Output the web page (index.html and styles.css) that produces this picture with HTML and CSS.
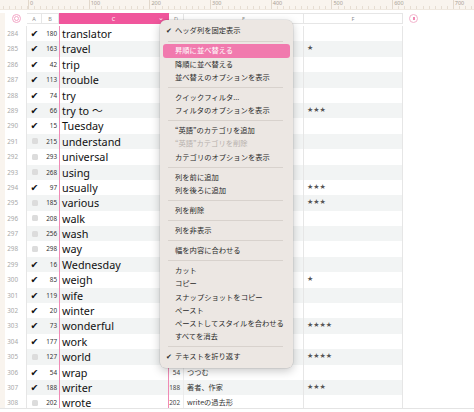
FILE: index.html
```html
<!DOCTYPE html>
<html lang="ja">
<head>
    <meta charset="UTF-8">
    <title>単語帳</title>
    <link rel="stylesheet" href="styles.css">
</head>
<body>
<div class="page">
    <div class="ruler">
        <span>0</span><span>100</span><span>200</span><span>300</span><span>400</span><span>500</span><span>600</span><span>700</span>
    </div>

    <div class="sheet">
        <div class="vruler"></div>
        <div class="table">
            <div class="head">
                <span class="hnum"><i class="ring"></i></span>
                <span>A</span>
                <span>B</span>
                <span class="hsel">C<b class="chev">⌄</b></span>
                <span>D</span>
                <span>E</span>
                <span>F</span>
                <span class="hrest"><i class="pause"></i></span>
            </div>

            <div class="body">
                <div class="row"><span class="num">284</span><span class="chk">✔</span><span class="cnt">180</span><span class="word">translator</span><span class="d"></span><span class="e"></span><span class="f"></span><span class="rest"></span></div>
                <div class="row"><span class="num">285</span><span class="chk">✔</span><span class="cnt">163</span><span class="word">travel</span><span class="d"></span><span class="e"></span><span class="f">★</span><span class="rest"></span></div>
                <div class="row"><span class="num">286</span><span class="chk">✔</span><span class="cnt">42</span><span class="word">trip</span><span class="d"></span><span class="e"></span><span class="f"></span><span class="rest"></span></div>
                <div class="row"><span class="num">287</span><span class="chk">✔</span><span class="cnt">113</span><span class="word">trouble</span><span class="d"></span><span class="e"></span><span class="f"></span><span class="rest"></span></div>
                <div class="row"><span class="num">288</span><span class="chk">✔</span><span class="cnt">74</span><span class="word">try</span><span class="d"></span><span class="e"></span><span class="f"></span><span class="rest"></span></div>
                <div class="row"><span class="num">289</span><span class="chk">✔</span><span class="cnt">66</span><span class="word">try to 〜</span><span class="d"></span><span class="e"></span><span class="f">★★★</span><span class="rest"></span></div>
                <div class="row"><span class="num">290</span><span class="chk">✔</span><span class="cnt">15</span><span class="word">Tuesday</span><span class="d"></span><span class="e"></span><span class="f"></span><span class="rest"></span></div>
                <div class="row"><span class="num">291</span><span class="chk off"></span><span class="cnt">215</span><span class="word">understand</span><span class="d"></span><span class="e"></span><span class="f"></span><span class="rest"></span></div>
                <div class="row"><span class="num">292</span><span class="chk off"></span><span class="cnt">293</span><span class="word">universal</span><span class="d"></span><span class="e"></span><span class="f"></span><span class="rest"></span></div>
                <div class="row"><span class="num">293</span><span class="chk off"></span><span class="cnt">268</span><span class="word">using</span><span class="d"></span><span class="e"></span><span class="f"></span><span class="rest"></span></div>
                <div class="row"><span class="num">294</span><span class="chk">✔</span><span class="cnt">97</span><span class="word">usually</span><span class="d"></span><span class="e"></span><span class="f">★★★</span><span class="rest"></span></div>
                <div class="row"><span class="num">295</span><span class="chk off"></span><span class="cnt">185</span><span class="word">various</span><span class="d"></span><span class="e"></span><span class="f">★★★</span><span class="rest"></span></div>
                <div class="row"><span class="num">296</span><span class="chk off"></span><span class="cnt">208</span><span class="word">walk</span><span class="d"></span><span class="e"></span><span class="f"></span><span class="rest"></span></div>
                <div class="row"><span class="num">297</span><span class="chk off"></span><span class="cnt">256</span><span class="word">wash</span><span class="d"></span><span class="e"></span><span class="f"></span><span class="rest"></span></div>
                <div class="row"><span class="num">298</span><span class="chk off"></span><span class="cnt">298</span><span class="word">way</span><span class="d"></span><span class="e"></span><span class="f"></span><span class="rest"></span></div>
                <div class="row"><span class="num">299</span><span class="chk">✔</span><span class="cnt">16</span><span class="word">Wednesday</span><span class="d"></span><span class="e"></span><span class="f"></span><span class="rest"></span></div>
                <div class="row"><span class="num">300</span><span class="chk">✔</span><span class="cnt">85</span><span class="word">weigh</span><span class="d"></span><span class="e"></span><span class="f">★</span><span class="rest"></span></div>
                <div class="row"><span class="num">301</span><span class="chk">✔</span><span class="cnt">119</span><span class="word">wife</span><span class="d"></span><span class="e"></span><span class="f"></span><span class="rest"></span></div>
                <div class="row"><span class="num">302</span><span class="chk">✔</span><span class="cnt">20</span><span class="word">winter</span><span class="d"></span><span class="e"></span><span class="f"></span><span class="rest"></span></div>
                <div class="row"><span class="num">303</span><span class="chk">✔</span><span class="cnt">73</span><span class="word">wonderful</span><span class="d"></span><span class="e"></span><span class="f">★★★★</span><span class="rest"></span></div>
                <div class="row"><span class="num">304</span><span class="chk">✔</span><span class="cnt">177</span><span class="word">work</span><span class="d"></span><span class="e"></span><span class="f"></span><span class="rest"></span></div>
                <div class="row"><span class="num">305</span><span class="chk off"></span><span class="cnt">127</span><span class="word">world</span><span class="d"></span><span class="e"></span><span class="f">★★★★</span><span class="rest"></span></div>
                <div class="row"><span class="num">306</span><span class="chk">✔</span><span class="cnt">54</span><span class="word">wrap</span><span class="d">54</span><span class="e">つつむ</span><span class="f"></span><span class="rest"></span></div>
                <div class="row"><span class="num">307</span><span class="chk">✔</span><span class="cnt">188</span><span class="word">writer</span><span class="d">188</span><span class="e">著者、作家</span><span class="f">★★★</span><span class="rest"></span></div>
                <div class="row"><span class="num">308</span><span class="chk off"></span><span class="cnt">202</span><span class="word">wrote</span><span class="d">202</span><span class="e">writeの過去形</span><span class="f"></span><span class="rest"></span></div>
            </div>
        </div>
    </div>

    <!-- context menu for column C -->
    <div class="menu">
        <div class="item"><span class="tick">✔</span>ヘッダ列を固定表示</div>
        <div class="sep"></div>
        <div class="item active">昇順に並べ替える</div>
        <div class="item">降順に並べ替える</div>
        <div class="item">並べ替えのオプションを表示</div>
        <div class="sep"></div>
        <div class="item">クイックフィルタ...</div>
        <div class="item">フィルタのオプションを表示</div>
        <div class="sep"></div>
        <div class="item">“英語”のカテゴリを追加</div>
        <div class="item disabled">“英語”カテゴリを削除</div>
        <div class="item">カテゴリのオプションを表示</div>
        <div class="sep"></div>
        <div class="item">列を前に追加</div>
        <div class="item">列を後ろに追加</div>
        <div class="sep"></div>
        <div class="item">列を削除</div>
        <div class="sep"></div>
        <div class="item">列を非表示</div>
        <div class="sep"></div>
        <div class="item">幅を内容に合わせる</div>
        <div class="sep"></div>
        <div class="item">カット</div>
        <div class="item">コピー</div>
        <div class="item">スナップショットをコピー</div>
        <div class="item">ペースト</div>
        <div class="item">ペーストしてスタイルを合わせる</div>
        <div class="item">すべてを消去</div>
        <div class="sep"></div>
        <div class="item"><span class="tick">✔</span>テキストを折り返す</div>
    </div>
</div>
</body>
</html>
```

FILE: styles.css
```css
body {
    margin: 0;
    background: #fff;
    font-family: "Noto Sans", "Noto Sans CJK JP", sans-serif;
}

.page {
    position: relative;
    width: 474px;
    height: 412px;
    overflow: hidden;
}

/* ruler */
.ruler {
    height: 10px;
    display: flex;
    padding-left: 28px;
    background-color: #f9f4ee;
    background-image: repeating-linear-gradient(to right, #e6ddd2 0 1px, transparent 1px 6.07px);
    background-size: 100% 3px;
    background-position: 28px bottom;
    background-repeat: repeat-x;
    border-bottom: 1px solid #efe8df;
    box-sizing: border-box;
}

.ruler span {
    flex: none;
    width: 60.7px;
    box-sizing: border-box;
    border-left: 1px solid #e2d8cc;
    padding-left: 1px;
    font-size: 5.5px;
    line-height: 7px;
    color: #a89f96;
}

/* sheet */
.sheet {
    margin-top: 3px;
    height: 395px;
    display: flex;
    overflow: hidden;
    border-bottom: 1px solid #e4e4e4;
}

.vruler {
    width: 5px;
    flex: none;
    background: #f9f4ee;
}

.table {
    flex: 1;
}

.head,
.row {
    display: grid;
    grid-template-columns: 22px 15px 17px 110px 15px 120px 99px 1fr;
}

.head {
    height: 11px;
    margin-bottom: 2px;
}

.head span {
    display: flex;
    align-items: center;
    justify-content: center;
    border-top: 1px solid #e6e6e6;
    border-bottom: 1px solid #e6e6e6;
    border-right: 1px solid #e6e6e6;
    font-size: 5.5px;
    color: #8d8d8d;
}

.head .hnum,
.head .hrest {
    border: none;
}

.head .hrest {
    justify-content: flex-start;
    padding-left: 6px;
}

.head .hsel {
    position: relative;
    background: #f0569c;
    border-color: #f0569c;
    color: #fff;
}

.chev {
    position: absolute;
    right: 4px;
    top: -1px;
    font-weight: normal;
    font-size: 7px;
}

.ring {
    width: 7px;
    height: 7px;
    border: 1px solid #f3a6c6;
    border-radius: 50%;
    display: flex;
    align-items: center;
    justify-content: center;
}

.ring::after {
    content: "";
    width: 3px;
    height: 3px;
    border: 1px solid #f3a6c6;
    border-radius: 50%;
}

.pause {
    width: 9px;
    height: 9px;
    box-sizing: border-box;
    border: 1px solid #f3b4cd;
    border-radius: 50%;
    background: linear-gradient(to right, transparent 2.8px, #f08ab5 2.8px 3.6px, transparent 3.6px 4.4px, #f08ab5 4.4px 5.2px, transparent 5.2px);
    background-size: 100% 3px;
    background-position: 0 center;
    background-repeat: no-repeat;
}

/* rows */
.row {
    height: 15.4px;
    line-height: 15.4px;
}

.row span {
    overflow: hidden;
    white-space: nowrap;
}

.row:nth-child(even) span {
    background: #f2f4f4;
}

.row:nth-child(even) .num,
.row:nth-child(even) .rest {
    background: none;
}

.num {
    border-right: 1px solid #e6e6e6;
    text-align: right;
    padding-right: 8px;
    font-size: 6.3px;
    color: #a8a8a8;
}

.chk {
    text-align: center;
    font-family: "DejaVu Sans", sans-serif;
    font-size: 9.5px;
    color: #111;
}

.chk.off {
    display: flex;
    align-items: center;
    justify-content: center;
}

.chk.off::after {
    content: "";
    width: 6px;
    height: 6px;
    border-radius: 1.5px;
    background: #dcdcdc;
}

.cnt {
    text-align: right;
    padding-right: 2px;
    font-size: 6.3px;
    color: #333;
}

.word {
    border-left: 1px solid #f08ab5;
    border-right: 1px solid #f08ab5;
    padding-left: 2px;
    font-size: 10.8px;
    color: #111;
}

.d {
    border-right: 1px solid #ececec;
    text-align: right;
    padding-right: 3px;
    font-size: 6.3px;
    color: #444;
}

.e {
    border-right: 1px solid #e6e6e6;
    padding-left: 3px;
    font-family: "Noto Sans CJK JP", sans-serif;
    font-size: 7.2px;
    color: #333;
}

.f {
    border-right: 1px solid #e6e6e6;
    padding-left: 3px;
    font-family: "DejaVu Sans", sans-serif;
    font-size: 7px;
    color: #555;
}

/* menu */
.menu {
    position: absolute;
    left: 160px;
    top: 20px;
    width: 133px;
    padding: 4.4px 3px;
    box-sizing: border-box;
    background: #ece7e3;
    border-radius: 6px;
    box-shadow: 0 0 0 0.5px rgba(0, 0, 0, 0.12), 0 3px 10px rgba(0, 0, 0, 0.22);
    font-family: "Noto Sans CJK JP", sans-serif;
    font-size: 7.3px;
    color: #2a2a2a;
}

.item {
    height: 13.2px;
    line-height: 13.2px;
    padding-left: 12px;
    border-radius: 3px;
    white-space: nowrap;
}

.item.active {
    background: #f17aae;
    color: #fff;
}

.item.disabled {
    color: #b7b1ad;
}

.tick {
    display: inline-block;
    width: 8px;
    margin-left: -9px;
    margin-right: 1px;
    font-family: "DejaVu Sans", sans-serif;
    font-size: 7px;
}

.sep {
    height: 6.9px;
    margin: 0 7px 0 5px;
    background: linear-gradient(#d8d2cd, #d8d2cd) center / 100% 1px no-repeat;
}
```
